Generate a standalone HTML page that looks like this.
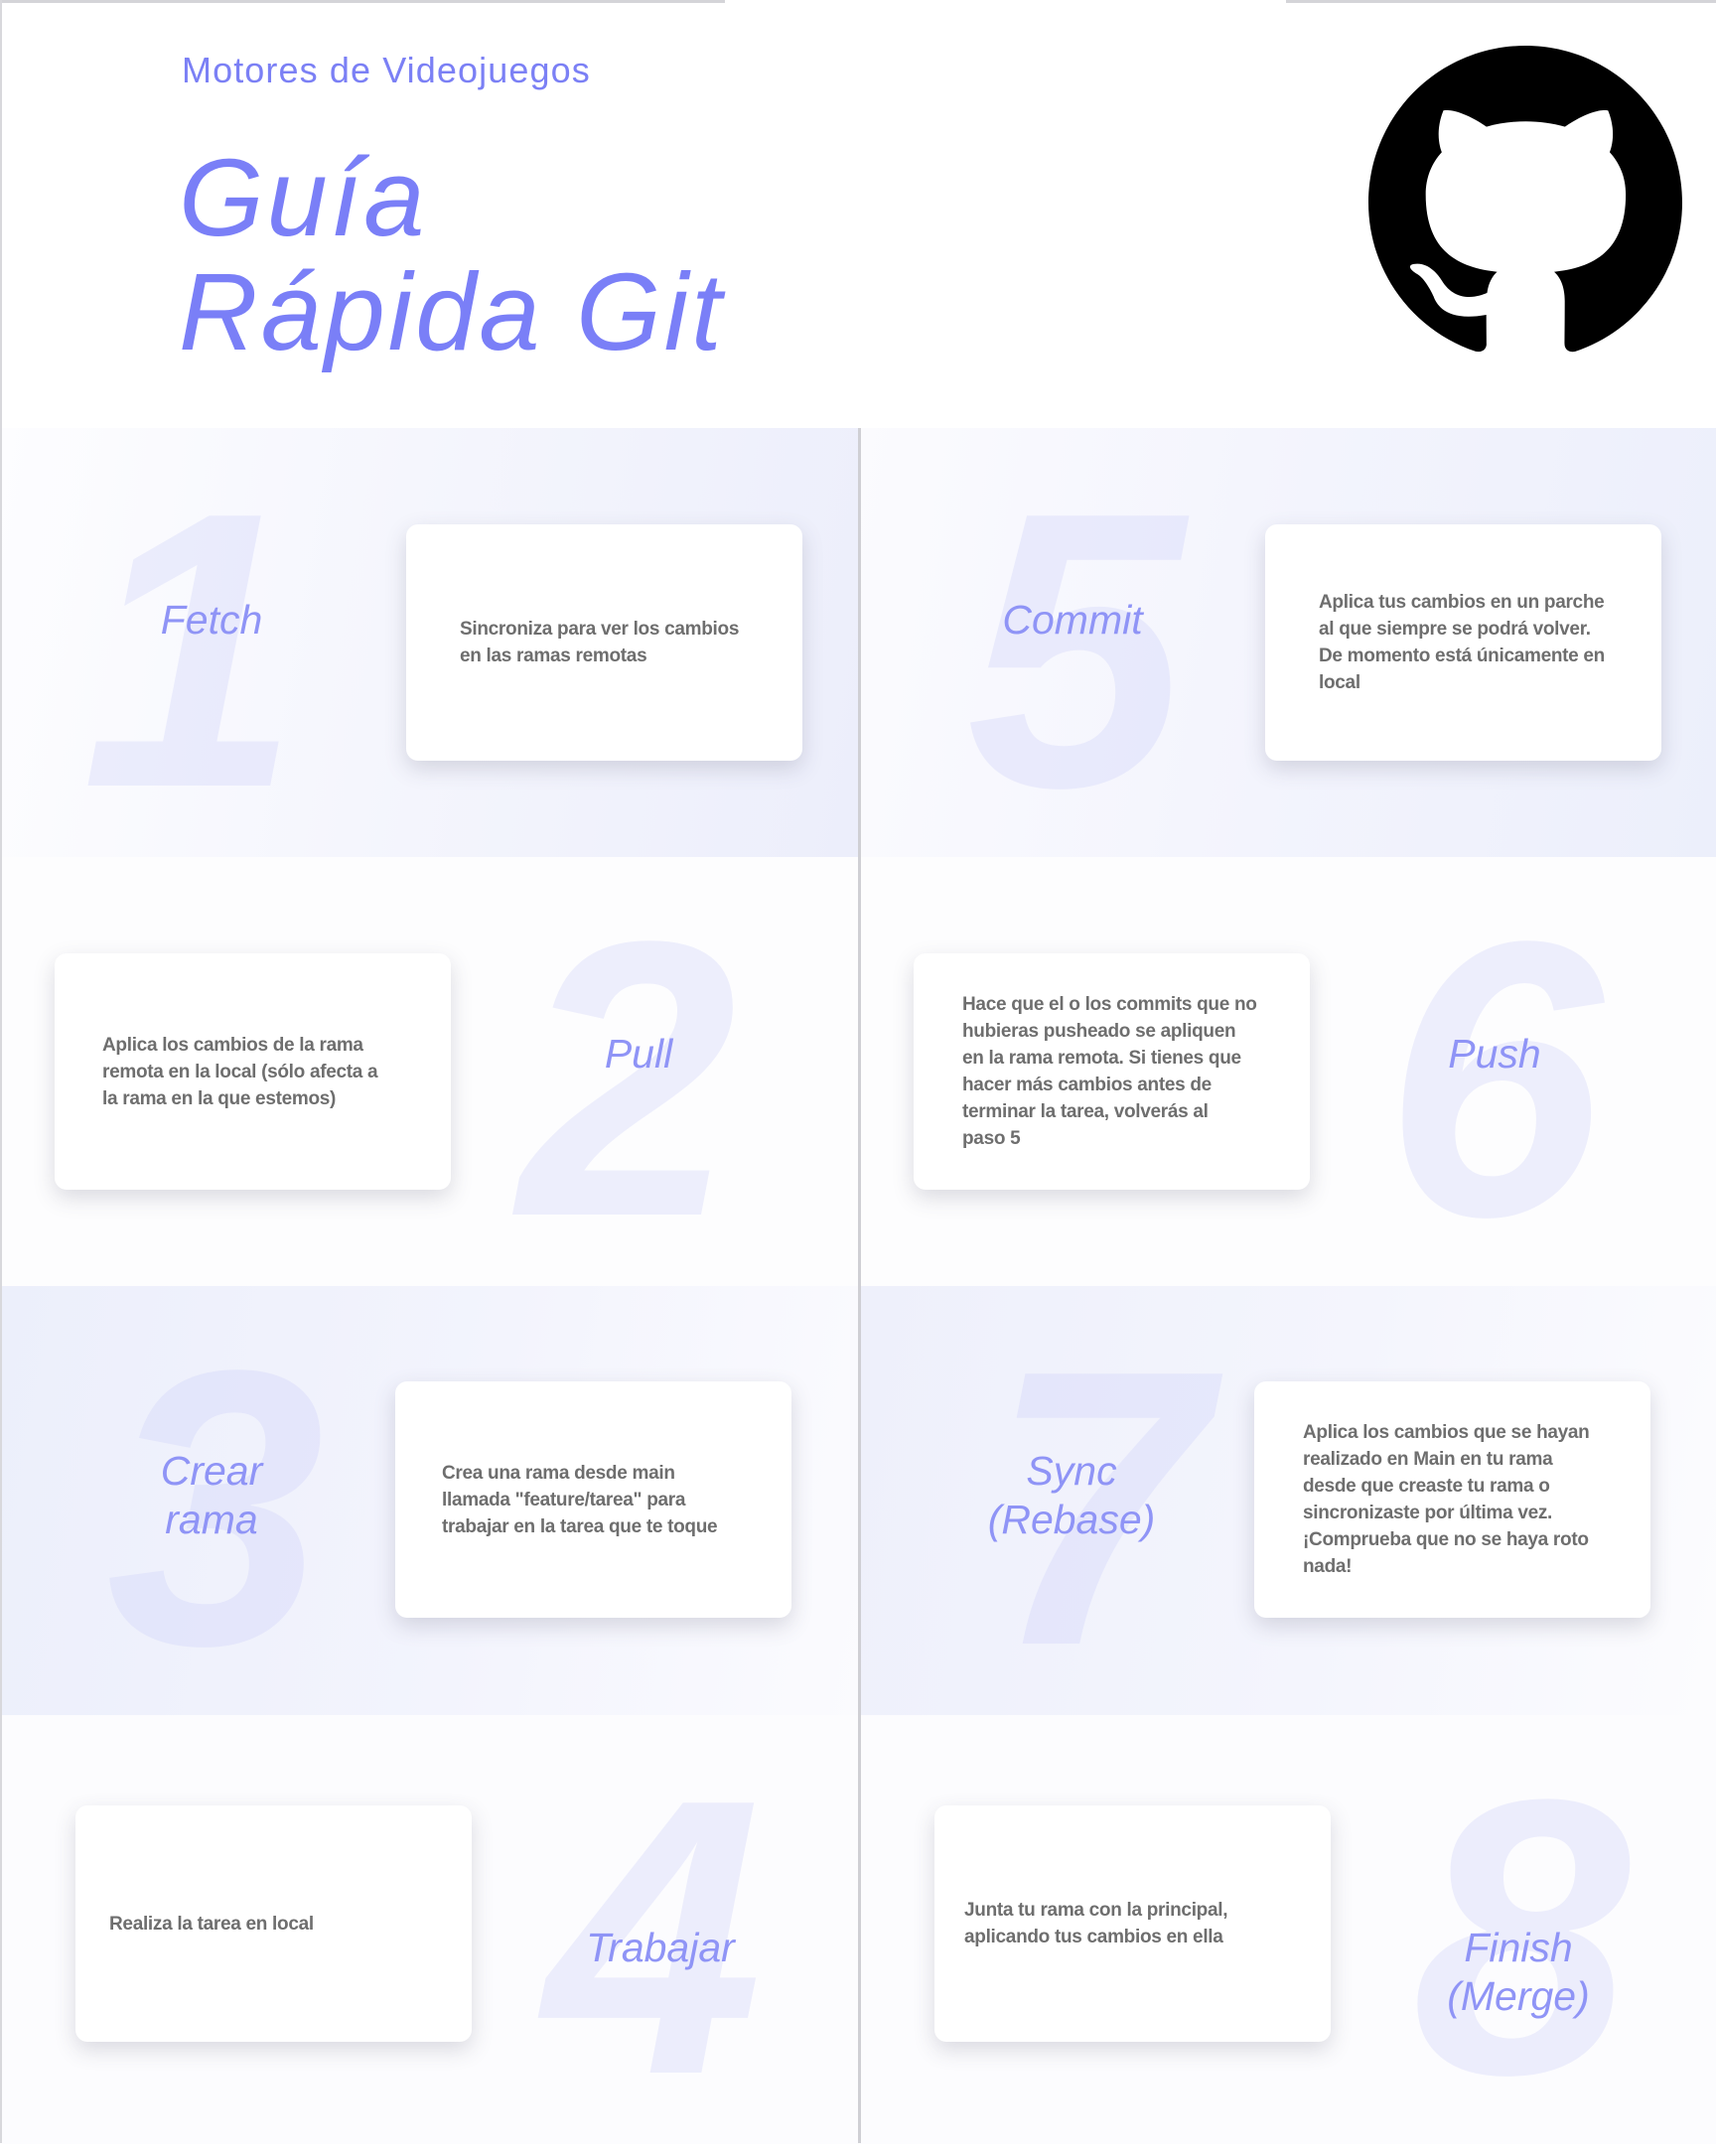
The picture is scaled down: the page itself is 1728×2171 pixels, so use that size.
<!DOCTYPE html>
<html><head><meta charset="utf-8"><style>
*{margin:0;padding:0;box-sizing:border-box}
body{width:1728px;height:2158px;position:relative;background:#fff;font-family:"Liberation Sans",sans-serif;overflow:hidden}
.abs{position:absolute}
.row{position:absolute;height:432px;width:863px}
.card{position:absolute;width:399px;height:238px;background:#fff;border-radius:12px;box-shadow:0 8px 22px rgba(60,60,90,0.18);display:flex;align-items:center;color:#6e6e6e;font-weight:bold;font-size:19px;line-height:27px;letter-spacing:-0.3px}
.num{position:absolute;width:500px;text-align:center;font-size:395px;line-height:1;font-weight:bold;font-style:italic;color:rgba(205,210,250,0.35)}
.lab{position:absolute;width:400px;height:120px;display:flex;align-items:center;justify-content:center;text-align:center;font-size:41px;line-height:49px;font-style:italic;color:#8f94f6}
</style></head><body>
<div class="abs" style="left:0;top:0;width:730px;height:3px;background:#d4d4d8"></div>
<div class="abs" style="left:1295px;top:0;width:433px;height:3px;background:#d4d4d8"></div>
<div class="abs" style="left:0;top:0;width:2px;height:2158px;background:#d8d8dc;z-index:5"></div>

<div class="abs" style="left:183px;top:50px;font-size:36px;color:#7b80f5;letter-spacing:1.1px">Motores de Videojuegos</div>
<div class="abs" style="left:180px;top:142px;font-size:110px;line-height:115px;font-style:italic;color:#7a7ff7;letter-spacing:3px">Guía<br>Rápida Git</div>

<svg class="abs" style="left:1378px;top:46px" width="316" height="316" viewBox="0 0 16 16"><path fill="#000" d="M8 0C3.580 0 0 3.58 0 8c0 3.54 2.29 6.53 5.47 7.59.4.07.55-.17.55-.38 0-.19-.01-.82-.01-1.490-2.01.37-2.530-.49-2.69-.94-.09-.23-.48-.94-.82-1.13-.28-.15-.68-.52-.01-.53.63-.01 1.08.58 1.23.82.72 1.21 1.87.87 2.33.66.07-.52.28-.87.51-1.07-1.78-.2-3.64-.89-3.64-3.95 0-.87.31-1.59.82-2.15-.08-.2-.36-1.02.08-2.12 0 0 .67-.21 2.2.82.64-.18 1.32-.27 2-.27.68 0 1.36.09 2 .27 1.53-1.04 2.2-.82 2.2-.82.44 1.1.16 1.92.08 2.12.51.56.82 1.27.82 2.15 0 3.07-1.87 3.75-3.65 3.95.29.25.54.73.54 1.48 0 1.07-.01 1.93-.01 2.2 0 .21.15.46.55.38A8.013 8.013 0 0016 8c0-4.42-3.58-8-8-8z"/></svg>

<div class="row" style="left:2px;top:431px;background:linear-gradient(100deg,#fdfdff 0%,#f5f6fd 45%,#eceefb 100%)"></div>
<div class="row" style="left:866px;top:431px;width:862px;background:linear-gradient(100deg,#fbfbfe 0%,#f3f4fd 50%,#eceffb 100%)"></div>
<div class="row" style="left:2px;top:863px;background:#fdfdfe"></div>
<div class="row" style="left:866px;top:863px;width:862px;background:#fdfdfe"></div>
<div class="row" style="left:2px;top:1295px;background:linear-gradient(100deg,#eceffb 0%,#f3f4fd 55%,#fbfbfe 100%)"></div>
<div class="row" style="left:866px;top:1295px;width:862px;background:linear-gradient(100deg,#eef0fb 0%,#f4f5fd 55%,#fcfcfe 100%)"></div>
<div class="row" style="left:2px;top:1727px;background:#fcfcfe"></div>
<div class="row" style="left:866px;top:1727px;width:862px;background:#fcfcfe"></div>
<div class="abs" style="left:864px;top:431px;width:3px;height:1727px;background:#cfcfd4"></div>

<div class="num" style="left:-58px;top:457px">1</div>
<div class="num" style="left:833px;top:457px">5</div>
<div class="num" style="left:382px;top:889px">2</div>
<div class="num" style="left:1254px;top:889px">6</div>
<div class="num" style="left:-33px;top:1321px">3</div>
<div class="num" style="left:856px;top:1321px">7</div>
<div class="num" style="left:408px;top:1753px">4</div>
<div class="num" style="left:1282px;top:1753px">8</div>

<div class="lab" style="left:13px;top:564px">Fetch</div>
<div class="lab" style="left:880px;top:564px">Commit</div>
<div class="lab" style="left:443px;top:1001px">Pull</div>
<div class="lab" style="left:1305px;top:1001px">Push</div>
<div class="lab" style="left:13px;top:1446px">Crear<br>rama</div>
<div class="lab" style="left:879px;top:1446px">Sync<br>(Rebase)</div>
<div class="lab" style="left:465px;top:1901px">Trabajar</div>
<div class="lab" style="left:1329px;top:1926px">Finish<br>(Merge)</div>

<div class="card" style="left:409px;top:528px;padding-left:54px">Sincroniza para ver los cambios<br>en las ramas remotas</div>
<div class="card" style="left:1274px;top:528px;padding-left:54px">Aplica tus cambios en un parche<br>al que siempre se podrá volver.<br>De momento está únicamente en<br>local</div>
<div class="card" style="left:55px;top:960px;padding-left:48px">Aplica los cambios de la rama<br>remota en la local (sólo afecta a<br>la rama en la que estemos)</div>
<div class="card" style="left:920px;top:960px;padding-left:49px">Hace que el o los commits que no<br>hubieras pusheado se apliquen<br>en la rama remota. Si tienes que<br>hacer más cambios antes de<br>terminar la tarea, volverás al<br>paso 5</div>
<div class="card" style="left:398px;top:1391px;padding-left:47px">Crea una rama desde main<br>llamada "feature/tarea" para<br>trabajar en la tarea que te toque</div>
<div class="card" style="left:1263px;top:1391px;padding-left:49px">Aplica los cambios que se hayan<br>realizado en Main en tu rama<br>desde que creaste tu rama o<br>sincronizaste por última vez.<br>¡Comprueba que no se haya roto<br>nada!</div>
<div class="card" style="left:76px;top:1818px;padding-left:34px">Realiza la tarea en local</div>
<div class="card" style="left:941px;top:1818px;padding-left:30px">Junta tu rama con la principal,<br>aplicando tus cambios en ella</div>
</body></html>
